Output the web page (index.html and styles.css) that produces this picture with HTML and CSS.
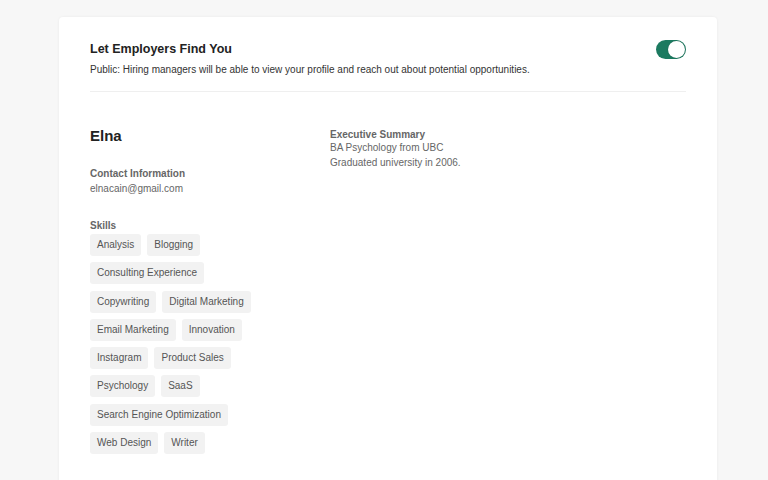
FILE: index.html
```html
<!DOCTYPE html>
<html lang="en">
<head>
    <meta charset="UTF-8">
    <meta name="viewport" content="width=device-width, initial-scale=1.0">
    <title>Profile Visibility</title>
    <link rel="stylesheet" href="styles.css">
</head>
<body>
    <div class="card">
        <div class="visibility">
            <div class="visibility-text">
                <h2>Let Employers Find You</h2>
                <p>Public: Hiring managers will be able to view your profile and reach out about potential opportunities.</p>
            </div>
            <div class="toggle on"><span class="knob"></span></div>
        </div>

        <div class="profile">
            <div class="profile-main">
                <h3 class="name">Elna</h3>

                <div class="section">
                    <h4>Contact Information</h4>
                    <p>elnacain@gmail.com</p>
                </div>

                <div class="section">
                    <h4>Skills</h4>
                    <div class="tags">
                        <span class="tag">Analysis</span>
                        <span class="tag">Blogging</span>
                        <span class="tag">Consulting Experience</span>
                        <span class="tag">Copywriting</span>
                        <span class="tag">Digital Marketing</span>
                        <span class="tag">Email Marketing</span>
                        <span class="tag">Innovation</span>
                        <span class="tag">Instagram</span>
                        <span class="tag">Product Sales</span>
                        <span class="tag">Psychology</span>
                        <span class="tag">SaaS</span>
                        <span class="tag">Search Engine Optimization</span>
                        <span class="tag">Web Design</span>
                        <span class="tag">Writer</span>
                    </div>
                </div>
            </div>

            <div class="profile-side">
                <h4>Executive Summary</h4>
                <p>BA Psychology from UBC<br>Graduated university in 2006.</p>
            </div>
        </div>
    </div>
</body>
</html>
```

FILE: styles.css
```css
* {
    margin: 0;
    padding: 0;
    box-sizing: border-box;
}

body {
    font-family: 'Liberation Sans', Arial, sans-serif;
    background: #f7f7f7;
    color: #222;
    padding: 17px 51px 0 59px;
}

.card {
    background: #fff;
    border-radius: 4px;
    box-shadow: 0 0 3px rgba(0, 0, 0, 0.06);
    padding: 25px 31px 24px;
    min-height: 480px;
}

.visibility {
    display: flex;
    justify-content: space-between;
    align-items: flex-start;
    padding-bottom: 16px;
    border-bottom: 1px solid #efefef;
}

.visibility h2 {
    font-size: 12.5px;
    font-weight: 700;
    color: #222;
    margin-bottom: 8px;
}

.visibility p {
    font-size: 10px;
    color: #333;
}

.toggle {
    width: 30px;
    height: 19px;
    border-radius: 10px;
    background: #1c7a60;
    position: relative;
    margin-top: -2px;
}

.toggle .knob {
    position: absolute;
    top: 1px;
    right: 1px;
    width: 17px;
    height: 17px;
    border-radius: 50%;
    background: #fff;
    box-shadow: 0 0 1px rgba(0, 0, 0, 0.3);
}

.profile {
    display: grid;
    grid-template-columns: 240px 1fr;
    padding-top: 35px;
}

.name {
    font-size: 15px;
    font-weight: 700;
    color: #222;
    margin-bottom: 24px;
}

.section {
    margin-bottom: 24px;
}

h4 {
    font-size: 10px;
    font-weight: 700;
    color: #666;
    margin-bottom: 3px;
}

.section p,
.profile-side p {
    font-size: 10px;
    color: #666;
    line-height: 14px;
}

.section p {
    margin-top: 1px;
}

.profile-side {
    padding-top: 2px;
}

.profile-side h4 {
    margin-bottom: 1px;
}

.profile-side p {
    line-height: 14.5px;
}

.tags {
    display: flex;
    flex-wrap: wrap;
    gap: 6.3px 6px;
    width: 172px;
    margin-top: 1px;
}

.tag {
    background: #f2f2f2;
    color: #555;
    font-size: 10px;
    line-height: 22px;
    padding: 0 7px;
    border-radius: 3px;
}
```
